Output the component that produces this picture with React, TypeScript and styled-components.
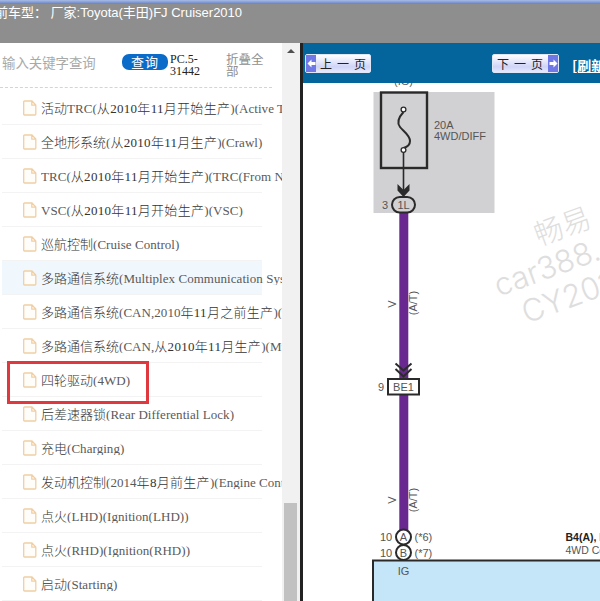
import React from "react";
import styled, { createGlobalStyle } from "styled-components";

const Global = createGlobalStyle`
  html, body { margin: 0; padding: 0; background: #fff; overflow: hidden; }
  * { box-sizing: border-box; }
`;

const Page = styled.div`
  width: 600px;
  height: 601px;
  display: flex;
  flex-direction: column;
  overflow: hidden;
`;

const TopStrip = styled.div`
  height: 4px;
  background: linear-gradient(#a9bce6, #6482c8);
`;

const TitleBar = styled.div`
  height: 39px;
  flex: none;
  padding-top: 1px;
  background: #8e8e8e;
  color: #fff;
  font: 13px/1 "Liberation Sans", "Noto Sans CJK SC", sans-serif;
  white-space: pre;
  overflow: hidden;
`;

const TitleText = styled.div`
  margin-left: -5px;
  line-height: 16px;
`;

const Body = styled.div`
  flex: 1;
  display: flex;
  min-height: 0;
`;

const Sidebar = styled.aside`
  width: 300px;
  flex: none;
  display: flex;
`;

const ListColumn = styled.div`
  width: 282px;
  flex: none;
  overflow: hidden;
`;

const SearchBar = styled.div`
  height: 45px;
  padding-left: 2px;
  display: flex;
  align-items: center;
  width: 272px;
  border-bottom: 1px dashed #d4d4d4;
`;

const SearchHint = styled.div`
  width: 120px;
  margin-top: -4px;
  color: #a9a9a9;
  font: 13.4px/1 "Noto Sans CJK SC", sans-serif;
`;

const SearchButton = styled.div`
  width: 46px;
  height: 16px;
  margin-top: -7px;
  border-radius: 7px;
  background: #0a6cc8;
  color: #fff;
  font: 13px/15px "Noto Sans CJK SC", sans-serif;
  text-align: center;
  letter-spacing: 1px;
`;

const VersionLabel = styled.div`
  width: 32px;
  margin-left: 2px;
  color: #222;
  font: 12px/12px "Liberation Serif", serif;
`;

const CollapseLabel = styled.div`
  width: 38px;
  margin-left: 24px;
  color: #8f8f8f;
  font: 12.5px/12px "Noto Sans CJK SC", sans-serif;
`;

const List = styled.ul`
  list-style: none;
  margin: 3px 0 0 2px;
  padding: 0;
  width: 280px;
`;

const Row = styled.li<{ $active?: boolean }>`
  position: relative;
  height: 34px;
  width: 260px;
  display: flex;
  align-items: center;
  padding-left: 21px;
  background: ${(p) => (p.$active ? "#f1f8fd" : "transparent")};
  border-bottom: 1px solid #f3f3f3;
  font: 13px/1 "Liberation Serif", "Noto Sans CJK SC", serif;
  color: #5a5a5a;
  white-space: nowrap;
`;

const RowIcon = styled.svg`
  width: 14px;
  height: 16px;
  flex: none;
`;

const RowLabel = styled.span`
  width: 259px;
  flex: none;
  overflow: hidden;
  margin-left: 4px;
  padding-top: 2px;
  letter-spacing: 0.05px;
`;

const Zh = styled.span<{ $dated?: boolean }>`
  color: #333;
  letter-spacing: ${(p) => (p.$dated ? "0.3px" : "0")};
  font-weight: 300;
`;

const Highlight = styled.div`
  position: absolute;
  left: 5px;
  top: -2px;
  width: 142px;
  height: 43px;
  border: 3px solid #e0383f;
`;

const Scrollbar = styled.div`
  width: 18px;
  flex: none;
  background: #f1f1f1;
  display: flex;
  flex-direction: column;
  align-items: flex-start;
  justify-content: space-between;
  padding-left: 2px;
`;

const ScrollUp = styled.div`
  margin-top: 6px;
  margin-left: 3px;
  width: 0;
  height: 0;
  border-left: 4px solid transparent;
  border-right: 4px solid transparent;
  border-bottom: 4px solid #505050;
`;

const ScrollThumb = styled.div`
  width: 13px;
  height: 98px;
  background: #c1c1c1;
`;

const Viewer = styled.main`
  flex: 1;
  min-width: 0;
  display: flex;
  flex-direction: column;
  border-left: 3px solid #222;
`;

const PagerBar = styled.div`
  height: 40px;
  flex: none;
  background: #03659b;
  display: flex;
  align-items: center;
  padding-left: 2px;
  white-space: nowrap;
  overflow: hidden;
`;

const PageButton = styled.div<{ $next?: boolean }>`
  width: ${(p) => (p.$next ? "67px" : "66px")};
  height: 19px;
  margin-top: 1px;
  margin-left: ${(p) => (p.$next ? "121px" : "0")};
  display: flex;
  flex-direction: ${(p) => (p.$next ? "row-reverse" : "row")};
  align-items: center;
  background: linear-gradient(#ffffff, #cfd4f8 70%, #e6e8fd);
  border: 1px solid #dfe6f7;
  border-radius: 2px;
  color: #222;
  font: 12px/1 "Noto Sans CJK SC", sans-serif;
`;

const ArrowCell = styled.div`
  width: 10px;
  align-self: stretch;
  flex: none;
  background: #6f78e6;
  display: flex;
  align-items: center;
  justify-content: center;
`;

const ButtonLabel = styled.span`
  flex: 1;
  text-align: center;
  letter-spacing: 5px;
  padding-left: 4px;
`;

const LinkGap = styled.span`
  width: 5px;
  height: 1px;
  margin-top: 16px;
  background: #fff;
`;

const RefreshLink = styled.span`
  margin-left: 13px;
  margin-top: 3px;
  color: #fff;
  font: bold 14px/1 "Noto Sans CJK SC", sans-serif;
  text-decoration: underline;
`;

const Diagram = styled.div`
  flex: 1;
  min-height: 0;
  overflow: hidden;
  background: #fff;
`;

const Drawing = styled.svg`
  display: block;
  width: 297px;
  height: 518px;
`;

const items: { zh: string; en: string; zh2?: string; en2?: string }[] = [
  { zh: "活动", en: "TRC(", zh2: "从2010年11月开始生产", en2: ")(Active TRC)" },
  { zh: "全地形系统", en: "(", zh2: "从2010年11月生产", en2: ")(Crawl)" },
  { zh: "", en: "TRC(", zh2: "从2010年11月开始生产", en2: ")(TRC(From Nov.2010))" },
  { zh: "", en: "VSC(", zh2: "从2010年11月开始生产", en2: ")(VSC)" },
  { zh: "巡航控制", en: "(Cruise Control)" },
  { zh: "多路通信系统", en: "(Multiplex Communication System)" },
  { zh: "多路通信系统", en: "(CAN,2010", zh2: "年11月之前生产", en2: ")(CAN)" },
  { zh: "多路通信系统", en: "(CAN,", zh2: "从2010年11月生产", en2: ")(Multiplex)" },
  { zh: "四轮驱动", en: "(4WD)" },
  { zh: "后差速器锁", en: "(Rear Differential Lock)" },
  { zh: "充电", en: "(Charging)" },
  { zh: "发动机控制", en: "(2014", zh2: "年8月前生产", en2: ")(Engine Control)" },
  { zh: "点火", en: "(LHD)(Ignition(LHD))" },
  { zh: "点火", en: "(RHD)(Ignition(RHD))" },
  { zh: "启动", en: "(Starting)" },
];

const FileIcon = () => (
  <RowIcon viewBox="0 0 14 16" fill="none">
    <path
      d="M1.5 1h7.5l3.8 4v9.2a.8.8 0 0 1-.8.8H1.5a.8.8 0 0 1-.8-.8V1.8A.8.8 0 0 1 1.5 1zM8.8 1v4.2h4"
      stroke="#f0cfa4"
      strokeWidth="1.3"
      strokeLinejoin="round"
      fill="#fffdfa"
    />
  </RowIcon>
);

const Arrow = ({ dir }: { dir: "l" | "r" }) => (
  <svg width="9" height="9" viewBox="0 0 9 9">
    <path d={dir === "l" ? "M0.5 4.5 4.5 .5V3H8.5V6H4.5V8.5Z" : "M8.5 4.5 4.5 .5V3H.5V6H4.5V8.5Z"} fill="#fff" />
  </svg>
);

const ink = "#2a2a2a";
const label = "#555";
const sans = "Liberation Sans, sans-serif";
const water = "#dedede";

const WiringDiagram = () => (
  <Drawing viewBox="303 83 297 518">
    <rect x="373.5" y="92" width="121" height="121" fill="#d1d1d3" />
    <text x="403.5" y="85" textAnchor="middle" fontFamily={sans} fontSize="11" fill={label}>(IG)</text>
    <rect x="381" y="92.5" width="46" height="75.5" fill="#d1d1d3" stroke={ink} strokeWidth="2.4" />
    <path
      d="M403.5 112C398 118 397 123 400 127C403 131 410 135 410 141C410 145 407 147 403.5 148"
      fill="none"
      stroke={ink}
      strokeWidth="2"
    />
    <circle cx="403.5" cy="109.5" r="2.4" fill="#fff" stroke={ink} strokeWidth="1.3" />
    <circle cx="403.5" cy="150" r="2.4" fill="#fff" stroke={ink} strokeWidth="1.3" />
    <path d="M403.5 152V190" stroke={ink} strokeWidth="1.6" />
    <path d="M397.5 184 403.5 190 409.5 184V190.5L403.5 197 397.5 190.5Z" fill={ink} />
    <text x="434" y="129" fontFamily={sans} fontSize="11" fill={label}>20A</text>
    <text x="434" y="139.5" fontFamily={sans} fontSize="11" fill={label}>4WD/DIFF</text>
    <rect x="399.3" y="213" width="9" height="318" fill="#68288f" />
    <text x="385" y="209" textAnchor="middle" fontFamily={sans} fontSize="11" fill={label}>3</text>
    <rect x="392" y="197" width="23" height="15.5" rx="7.7" fill="#d1d1d3" stroke={ink} strokeWidth="2" />
    <text x="403.5" y="209" textAnchor="middle" fontFamily={sans} fontSize="11" fill={label}>1L</text>

    <text transform="translate(396 304) rotate(-90)" textAnchor="middle" fontFamily={sans} fontSize="11" fill={label}>V</text>
    <text transform="translate(417 303) rotate(-90)" textAnchor="middle" fontFamily={sans} fontSize="11" fill={label}>(A/T)</text>

    <path d="M395.5 363.5 403.5 370.5 411.5 363.5M395.5 369 403.5 376.5 411.5 369" fill="none" stroke={ink} strokeWidth="2" />
    <text x="381" y="391" textAnchor="middle" fontFamily={sans} fontSize="11" fill={label}>9</text>
    <rect x="388" y="379" width="31" height="15.5" fill="#fff" stroke={ink} strokeWidth="2" />
    <text x="403.5" y="391" textAnchor="middle" fontFamily={sans} fontSize="11" fill={label}>BE1</text>

    <text transform="translate(396 500) rotate(-90)" textAnchor="middle" fontFamily={sans} fontSize="11" fill={label}>V</text>
    <text transform="translate(417 500) rotate(-90)" textAnchor="middle" fontFamily={sans} fontSize="11" fill={label}>(A/T)</text>

    <text x="380" y="541" fontFamily={sans} fontSize="11" fill={label}>10</text>
    <text x="380" y="556.5" fontFamily={sans} fontSize="11" fill={label}>10</text>
    <circle cx="403.5" cy="537" r="7.5" fill="#fff" stroke={ink} strokeWidth="2" />
    <circle cx="403.5" cy="552.5" r="7.5" fill="#fff" stroke={ink} strokeWidth="2" />
    <text x="403.5" y="541" textAnchor="middle" fontFamily={sans} fontSize="11" fill={label}>A</text>
    <text x="403.5" y="556.5" textAnchor="middle" fontFamily={sans} fontSize="11" fill={label}>B</text>
    <text x="414.5" y="540.5" fontFamily={sans} fontSize="11" fill={label}>(*6)</text>
    <text x="414.5" y="556.5" fontFamily={sans} fontSize="11" fill={label}>(*7)</text>

    <text x="565.5" y="541" fontFamily={sans} fontSize="10.5" fontWeight="bold" fill="#222">B4(A), B</text>
    <text x="565.5" y="554" fontFamily={sans} fontSize="10.5" fill={label}>4WD Control ECU</text>
    <rect x="373" y="560.5" width="240" height="60" fill="#c5e5f8" stroke={ink} strokeWidth="2" />
    <text x="403.5" y="575" textAnchor="middle" fontFamily={sans} fontSize="11" fill={label}>IG</text>

    <g transform="rotate(-20 540 270)" fill={water} textAnchor="start">
      <text x="547" y="247" fontFamily="Noto Sans CJK SC, sans-serif" fontSize="29" fontWeight="300">畅易</text>
      <text x="492" y="281" fontFamily="Inter, sans-serif" fontSize="31" fontWeight="300">car388.com</text>
      <text x="509" y="316" fontFamily="Inter, sans-serif" fontSize="31" fontWeight="300">CY2010</text>
    </g>
  </Drawing>
);

export default function App() {
  return (
    <Page>
      <Global />
      <TopStrip />
      <TitleBar>
        <TitleText>{"前车型： 厂家:Toyota(丰田)FJ Cruiser2010"}</TitleText>
      </TitleBar>
      <Body>
        <Sidebar>
          <ListColumn>
            <SearchBar>
              <SearchHint>输入关键字查询</SearchHint>
              <SearchButton>查询</SearchButton>
              <VersionLabel>PC.5-31442</VersionLabel>
              <CollapseLabel>折叠全部</CollapseLabel>
            </SearchBar>
            <List>
              {items.map((it, i) => (
                <Row key={i} $active={i === 5}>
                  <FileIcon />
                  <RowLabel>
                    {it.zh && <Zh>{it.zh}</Zh>}
                    {it.en}
                    {it.zh2 && <Zh $dated>{it.zh2}</Zh>}
                    {it.en2}
                  </RowLabel>
                  {i === 8 && <Highlight />}
                </Row>
              ))}
            </List>
          </ListColumn>
          <Scrollbar>
            <ScrollUp />
            <ScrollThumb />
          </Scrollbar>
        </Sidebar>
        <Viewer>
          <PagerBar>
            <PageButton>
              <ArrowCell><Arrow dir="l" /></ArrowCell>
              <ButtonLabel>上一页</ButtonLabel>
            </PageButton>
            <PageButton $next>
              <ArrowCell><Arrow dir="r" /></ArrowCell>
              <ButtonLabel>下一页</ButtonLabel>
            </PageButton>
            <LinkGap />
            <RefreshLink>[刷新]</RefreshLink>
          </PagerBar>
          <Diagram>
            <WiringDiagram />
          </Diagram>
        </Viewer>
      </Body>
    </Page>
  );
}
